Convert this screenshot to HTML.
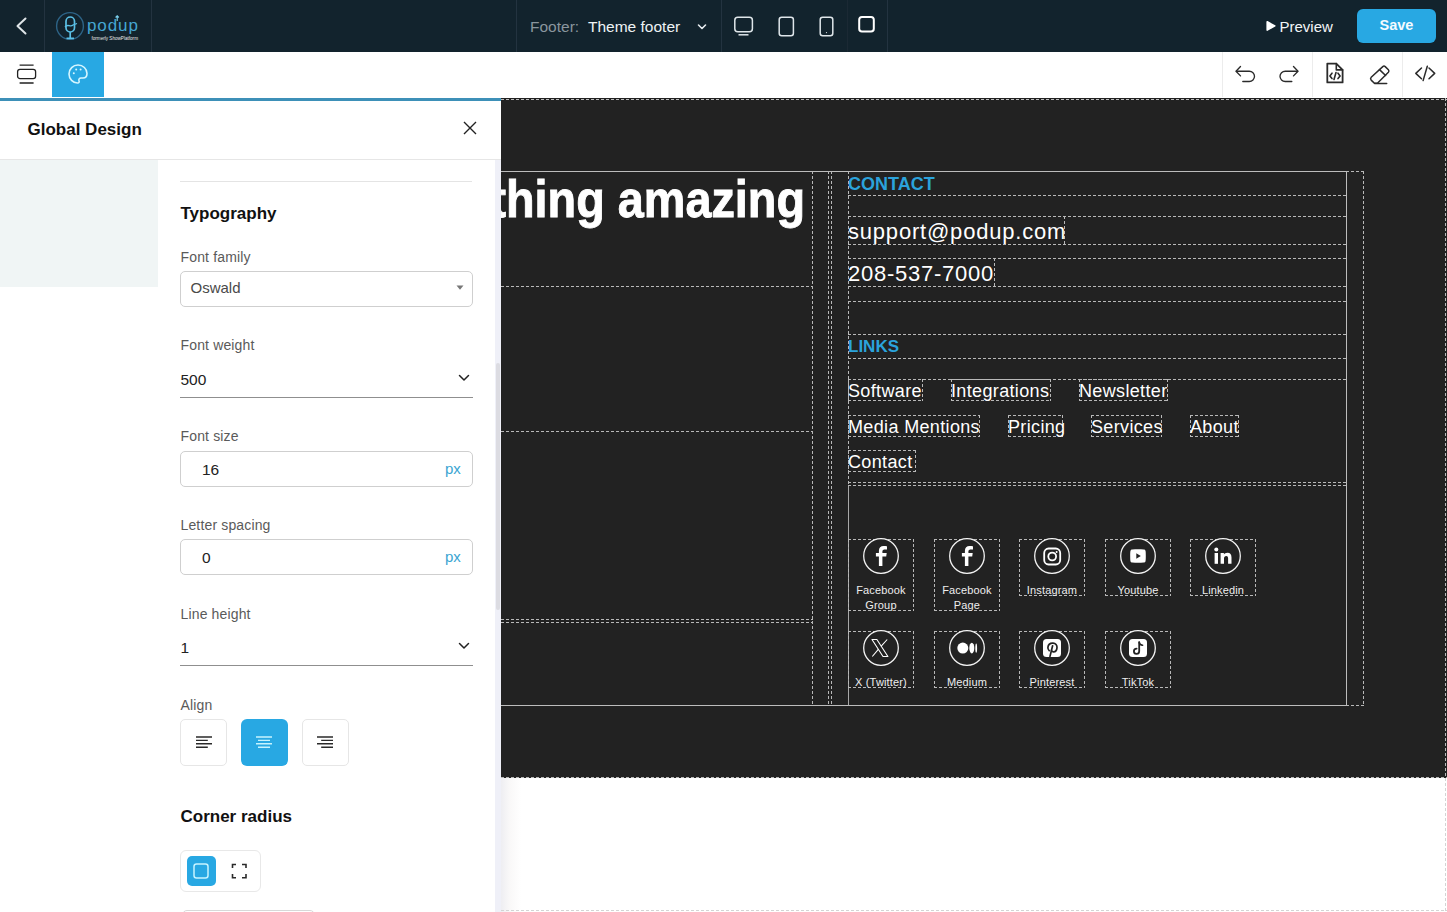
<!DOCTYPE html>
<html><head><meta charset="utf-8">
<style>
*{box-sizing:border-box;margin:0;padding:0}
html,body{width:1447px;height:912px;overflow:hidden;background:#fff;font-family:"Liberation Sans",sans-serif}
.a{position:absolute}
.t{position:absolute;white-space:nowrap}
.hd{position:absolute;height:1px;background:repeating-linear-gradient(90deg,#b9b9b9 0 3px,transparent 3px 5px)}
.vd{position:absolute;width:1px;background:repeating-linear-gradient(180deg,#b9b9b9 0 3px,transparent 3px 5px)}
.hdw{position:absolute;height:1px;background:repeating-linear-gradient(90deg,#d4d4d4 0 3px,transparent 3px 5px)}
.vdw{position:absolute;width:1px;background:repeating-linear-gradient(180deg,#d4d4d4 0 3px,transparent 3px 5px)}
.box{position:absolute;border:1px solid transparent}
.lbl{position:absolute;white-space:nowrap;font-size:14px;line-height:14px;color:#5a5a5a;letter-spacing:0.15px}
.div{position:absolute;width:1px;background:#233340}
.db{position:absolute;background:repeating-linear-gradient(90deg,#b9b9b9 0 3px,transparent 3px 5px) left top/100% 1px no-repeat,repeating-linear-gradient(90deg,#b9b9b9 0 3px,transparent 3px 5px) left bottom/100% 1px no-repeat,repeating-linear-gradient(180deg,#b9b9b9 0 3px,transparent 3px 5px) left top/1px 100% no-repeat,repeating-linear-gradient(180deg,#b9b9b9 0 3px,transparent 3px 5px) right top/1px 100% no-repeat}
.lk{font-size:18px;line-height:18px;color:#fff;letter-spacing:0.35px}
.sl{font-size:11px;line-height:11px;color:#eeeeee;text-align:center;letter-spacing:0.15px}
</style></head>
<body>

<!-- ============ TOP BAR ============ -->
<div class="a" id="topbar" style="left:0;top:0;width:1447px;height:52px;background:#12232d"></div>
<div class="div" style="left:44px;top:0;height:52px"></div>
<div class="div" style="left:151px;top:0;height:52px"></div>
<div class="div" style="left:516px;top:0;height:52px"></div>
<div class="div" style="left:721px;top:0;height:52px"></div>
<div class="div" style="left:847px;top:0;height:52px;background:#1b2934"></div>
<div class="div" style="left:887px;top:0;height:52px"></div>

<!-- back chevron -->
<svg class="a" style="left:12px;top:14px" width="20" height="24" viewBox="0 0 20 24"><path d="M13.5 4.5 L5.5 12 L13.5 19.5" fill="none" stroke="#dfe5e8" stroke-width="2" stroke-linecap="round" stroke-linejoin="round"/></svg>

<!-- logo -->
<svg class="a" style="left:54px;top:10px" width="90" height="32" viewBox="0 0 90 32">
  <circle cx="16" cy="16" r="13.4" fill="none" stroke="#2d6386" stroke-width="1.4"/>
  <rect x="12" y="7" width="8.5" height="15" rx="4.25" fill="none" stroke="#5bc0e6" stroke-width="1.7"/>
  <path d="M16.2 22 V28 M12.5 28.3 H20" stroke="#5bc0e6" stroke-width="1.7" fill="none"/>
  <path d="M11 17 C14 13, 16 18, 19 15 L23 13.5" stroke="#5bc0e6" stroke-width="1.3" fill="none"/>
  <text x="33" y="21" font-family="Liberation Sans" font-size="17" fill="#45a6d2" letter-spacing="0.9">podup</text>
  <path d="M63.2 5.8 L63.2 11 M61.6 7.5 L63.2 5.8 L64.8 7.5" stroke="#7cd2f0" stroke-width="1.1" fill="none"/>
  <text x="37.5" y="29.5" font-family="Liberation Sans" font-size="4.6" fill="#e8e8e8">formerly ShowPlatform</text>
</svg>

<!-- footer select -->
<div class="t" style="left:530px;top:18.5px;font-size:15.5px;line-height:16px;color:#8a969e">Footer:</div>
<div class="t" style="left:588px;top:18.5px;font-size:15.5px;line-height:16px;color:#eef3f5">Theme footer</div>
<svg class="a" style="left:696px;top:22px" width="12" height="10" viewBox="0 0 12 10"><path d="M2.5 3 L6 6.5 L9.5 3" fill="none" stroke="#e6ecef" stroke-width="1.6" stroke-linecap="round" stroke-linejoin="round"/></svg>

<!-- device icons -->
<svg class="a" style="left:730px;top:12px" width="160" height="28" viewBox="0 0 160 28">
  <rect x="4.8" y="5.2" width="17.6" height="14.6" rx="3" fill="none" stroke="#dfe6ea" stroke-width="1.5"/>
  <path d="M8.5 22.8 H18.5" stroke="#dfe6ea" stroke-width="1.5"/>
  <rect x="49.2" y="5.2" width="14.2" height="18.6" rx="2.5" fill="none" stroke="#dfe6ea" stroke-width="1.5"/>
  <rect x="90.2" y="5.2" width="12.6" height="18.6" rx="2.5" fill="none" stroke="#dfe6ea" stroke-width="1.5"/>
  <circle cx="96.5" cy="20.6" r="0.6" fill="#dfe6ea"/>
  <rect x="129.2" y="5" width="14.6" height="14.6" rx="2.8" fill="none" stroke="#ffffff" stroke-width="2"/>
</svg>

<!-- preview / save -->
<svg class="a" style="left:1265px;top:20px" width="12" height="12" viewBox="0 0 12 12"><path d="M2.2 1.8 L9.8 5.9 L2.2 10.1 Z" fill="#fff" stroke="#fff" stroke-width="1.6" stroke-linejoin="round"/></svg>
<div class="t" style="left:1279.5px;top:18.8px;font-size:15px;line-height:15px;color:#f2f5f7">Preview</div>
<div class="a" style="left:1357px;top:9px;width:79px;height:34px;border-radius:6px;background:#28a8e3"></div>
<div class="t" style="left:1357px;top:18.4px;width:79px;text-align:center;font-size:14.5px;line-height:14.5px;font-weight:700;color:#f4fbff">Save</div>

<!-- ============ TOOLBAR ============ -->
<div class="a" style="left:0;top:52px;width:1447px;height:46px;background:#fff"></div>
<svg class="a" style="left:14px;top:62px" width="24" height="24" viewBox="0 0 24 24">
  <path d="M5.6 3.2 H19.6 M5.6 21 H19.6" stroke="#222" stroke-width="1.3"/>
  <rect x="3.6" y="7.4" width="18" height="9.2" rx="2.4" fill="none" stroke="#222" stroke-width="1.3"/>
</svg>
<div class="a" style="left:52px;top:52px;width:52px;height:45px;background:#28a8e3"></div>
<svg class="a" style="left:66px;top:62px" width="24" height="24" viewBox="0 0 24 24">
  <path d="M12 3 C7 3 3 7 3 12 C3 17 7 21 11.5 21 C13 21 13.5 20 13 18.8 C12.5 17.4 13.3 16 15 16 H17 C19.5 16 21 14.3 21 11.5 C21 6.8 17 3 12 3 Z" fill="none" stroke="#d6f6ff" stroke-width="1.6" stroke-linejoin="round"/>
  <circle cx="7.8" cy="11.2" r="1" fill="#d6f6ff"/>
  <circle cx="10.2" cy="7.4" r="1" fill="#d6f6ff"/>
  <circle cx="14.6" cy="7.6" r="1" fill="#d6f6ff"/>
</svg>
<div class="a" style="left:1222px;top:52px;width:1px;height:45px;background:#ececec"></div>
<div class="a" style="left:1312px;top:52px;width:1px;height:45px;background:#ececec"></div>
<div class="a" style="left:1402px;top:52px;width:1px;height:45px;background:#ececec"></div>
<svg class="a" style="left:1230px;top:60px" width="210" height="28" viewBox="0 0 210 28">
  <g fill="none" stroke="#2b2b2b" stroke-width="1.5" stroke-linecap="round" stroke-linejoin="round">
    <!-- undo -->
    <path d="M10.5 6.5 L6 11.2 L10.5 15.9" stroke-width="1.35"/>
    <path d="M6.5 11.2 H19.3 C22.2 11.2 24.5 13.5 24.5 16.35 C24.5 19.2 22.2 21.5 19.3 21.5 H12.8" stroke-width="1.35"/>
    <!-- redo -->
    <path d="M63.5 6.5 L68 11.2 L63.5 15.9" stroke-width="1.35"/>
    <path d="M67.5 11.2 H55.2 C52.3 11.2 50 13.5 50 16.35 C50 19.2 52.3 21.5 55.2 21.5 H61.8" stroke-width="1.35"/>
    <!-- file code -->
    <path d="M97.3 3.6 H106.3 L112.6 9.9 V22.4 H97.3 Z" stroke-width="1.8"/>
    <path d="M106.3 3.6 V9.9 H112.6" stroke-width="1.6"/>
    <path d="M102 13.2 L99.9 15.9 L102 18.6 M108 13.2 L110.1 15.9 L108 18.6 M106 12.6 L104 19.4" stroke-width="1.6"/>
    <!-- eraser -->
    <path d="M141.2 17.2 L152.8 6.6 C153.5 6 154.5 6 155.2 6.6 L158.4 9.8 C159 10.5 159 11.5 158.4 12.2 L147.4 23.3 H144.4 L141.2 20.1 C140.5 19.3 140.5 18 141.2 17.2 Z"/>
    <path d="M149.5 9.6 L155.6 15.5"/>
    <path d="M144.6 23.4 H156.7"/>
    <!-- code -->
    <path d="M191.5 8 L185.8 13.4 L191.5 18.8 M199 8 L204.7 13.4 L199 18.8 M197.3 6.2 L193.1 20.6"/>
  </g>
</svg>

<!-- ============ CANVAS ============ -->
<div class="a" style="left:501px;top:98px;width:946px;height:680px;background:#222222"></div>
<div class="a" style="left:501px;top:778px;width:946px;height:134px;background:#fff"></div>
<div class="a" style="left:501px;top:778px;width:20px;height:134px;background:linear-gradient(90deg,rgba(238,238,242,1),rgba(248,247,247,0.8) 45%,rgba(255,255,255,0))"></div>
<div class="hd" style="left:501px;top:99px;width:946px"></div>
<div class="hd" style="left:501px;top:777px;width:946px"></div>
<div class="vd" style="left:1445px;top:98px;height:680px"></div>
<div class="hdw" style="left:501px;top:910px;width:946px"></div>
<div class="vdw" style="left:1445px;top:778px;height:134px"></div>

<!-- heading text -->
<div class="t" style="left:204.8px;top:170.6px;width:600px;text-align:right;font-size:52px;line-height:56px;font-weight:700;color:#fff;transform:scaleX(0.9);transform-origin:right top;-webkit-text-stroke:0.9px #fff">something amazing</div>

<!-- outlines -->
<div class="a" style="left:480px;top:171px;width:867px;height:535px;border:1px solid #bdbdbd"></div>
<div class="hd" style="left:1346px;top:171px;width:18px"></div>
<div class="hd" style="left:1346px;top:705px;width:18px"></div>
<div class="vd" style="left:1363px;top:171px;height:535px"></div>
<div class="vd" style="left:812px;top:171px;height:535px"></div>
<div class="vd" style="left:828px;top:171px;height:535px"></div>
<div class="vd" style="left:831px;top:171px;height:535px"></div>
<div class="vd" style="left:848px;top:171px;height:314px"></div>
<div class="a" style="left:848px;top:485px;width:1px;height:220px;background:#a8a8a8"></div>
<div class="hd" style="left:501px;top:286px;width:312px"></div>
<div class="hd" style="left:501px;top:431px;width:312px"></div>
<div class="hd" style="left:501px;top:619px;width:312px"></div>
<div class="hd" style="left:501px;top:622px;width:312px"></div>

<!-- right column horizontal lines -->
<div class="hd" style="left:848px;top:195px;width:498px"></div>
<div class="hd" style="left:848px;top:216px;width:498px"></div>
<div class="hd" style="left:848px;top:244px;width:498px"></div>
<div class="hd" style="left:848px;top:258px;width:498px"></div>
<div class="hd" style="left:848px;top:286px;width:498px"></div>
<div class="hd" style="left:848px;top:301px;width:498px"></div>
<div class="hd" style="left:848px;top:334px;width:498px"></div>
<div class="hd" style="left:848px;top:358px;width:498px"></div>
<div class="hd" style="left:848px;top:379px;width:498px"></div>
<div class="hd" style="left:848px;top:482px;width:498px"></div>
<div class="hd" style="left:848px;top:485px;width:498px"></div>
<div class="vd" style="left:1064px;top:216px;height:29px"></div>
<div class="vd" style="left:994px;top:258px;height:29px"></div>

<!-- contact texts -->
<div class="t" style="left:848px;top:175px;font-size:18px;line-height:18px;font-weight:700;color:#2ba3dc">CONTACT</div>
<div class="t" style="left:848px;top:221px;font-size:22px;line-height:22px;color:#fff;letter-spacing:0.8px">support@podup.com</div>
<div class="t" style="left:848px;top:263px;font-size:22px;line-height:22px;color:#fff;letter-spacing:0.75px">208-537-7000</div>
<div class="t" style="left:848px;top:338px;font-size:17px;line-height:17px;font-weight:700;color:#2ba3dc">LINKS</div>

<!-- links -->
<div id="links"></div>
<div class="db" style="left:848px;top:379px;width:75px;height:22px"></div>
<div class="t lk" style="left:848px;top:381.5px">Software</div>
<div class="db" style="left:951px;top:379px;width:100px;height:22px"></div>
<div class="t lk" style="left:951px;top:381.5px">Integrations</div>
<div class="db" style="left:1079px;top:379px;width:89px;height:22px"></div>
<div class="t lk" style="left:1079px;top:381.5px">Newsletter</div>
<div class="db" style="left:848px;top:415px;width:132px;height:22px"></div>
<div class="t lk" style="left:848px;top:417.7px">Media Mentions</div>
<div class="db" style="left:1008px;top:415px;width:55px;height:22px"></div>
<div class="t lk" style="left:1008px;top:417.7px">Pricing</div>
<div class="db" style="left:1091px;top:415px;width:71px;height:22px"></div>
<div class="t lk" style="left:1091px;top:417.7px">Services</div>
<div class="db" style="left:1190px;top:415px;width:49px;height:22px"></div>
<div class="t lk" style="left:1190px;top:417.7px">About</div>
<div class="db" style="left:848px;top:450px;width:68px;height:22px"></div>
<div class="t lk" style="left:848px;top:452.6px">Contact</div>
<div class="db" style="left:848px;top:539px;width:66px;height:72px"></div><svg class="a" style="left:862.5px;top:538px" width="36" height="36" viewBox="0 0 36 36"><circle cx="18" cy="18" r="17.3" fill="#222" stroke="#f2f2f2" stroke-width="1.3"/><path d="M15.9 28 V18.5 H12.9 V15 H15.9 V12.7 C15.9 9.7 17.7 7.9 20.5 7.9 C21.9 7.9 23.3 8.1 24 8.2 V11.4 H22.1 C20.5 11.4 19.4 11.9 19.4 13.3 V15 H23.7 L23.2 18.5 H19.4 V28 Z" fill="#fff"/></svg><div class="t sl" style="left:838px;top:584.5px;width:86px">Facebook</div><div class="t sl" style="left:838px;top:599.5px;width:86px">Group</div>
<div class="db" style="left:934px;top:539px;width:66px;height:72px"></div><svg class="a" style="left:948.5px;top:538px" width="36" height="36" viewBox="0 0 36 36"><circle cx="18" cy="18" r="17.3" fill="#222" stroke="#f2f2f2" stroke-width="1.3"/><path d="M15.9 28 V18.5 H12.9 V15 H15.9 V12.7 C15.9 9.7 17.7 7.9 20.5 7.9 C21.9 7.9 23.3 8.1 24 8.2 V11.4 H22.1 C20.5 11.4 19.4 11.9 19.4 13.3 V15 H23.7 L23.2 18.5 H19.4 V28 Z" fill="#fff"/></svg><div class="t sl" style="left:924px;top:584.5px;width:86px">Facebook</div><div class="t sl" style="left:924px;top:599.5px;width:86px">Page</div>
<div class="db" style="left:1019px;top:539px;width:66px;height:57px"></div><svg class="a" style="left:1033.5px;top:538px" width="36" height="36" viewBox="0 0 36 36"><circle cx="18" cy="18" r="17.3" fill="#222" stroke="#f2f2f2" stroke-width="1.3"/><rect x="10.2" y="10.5" width="16" height="16" rx="4.4" fill="none" stroke="#fff" stroke-width="1.8"/><circle cx="18.2" cy="18.5" r="3.9" fill="none" stroke="#fff" stroke-width="1.8"/><circle cx="22.6" cy="14" r="1" fill="#fff"/></svg><div class="t sl" style="left:1009px;top:584.5px;width:86px">Instagram</div>
<div class="db" style="left:1105px;top:539px;width:66px;height:57px"></div><svg class="a" style="left:1119.5px;top:538px" width="36" height="36" viewBox="0 0 36 36"><circle cx="18" cy="18" r="17.3" fill="#222" stroke="#f2f2f2" stroke-width="1.3"/><path d="M10.5 12.8 C10.8 11.8 11.4 11.5 12.4 11.4 C14 11.2 16 11.2 18 11.2 C20 11.2 22 11.2 23.6 11.4 C24.6 11.5 25.2 11.8 25.5 12.8 C25.8 14 25.8 16 25.8 18 C25.8 20 25.8 22 25.5 23.2 C25.2 24.2 24.6 24.5 23.6 24.6 C22 24.8 20 24.8 18 24.8 C16 24.8 14 24.8 12.4 24.6 C11.4 24.5 10.8 24.2 10.5 23.2 C10.2 22 10.2 20 10.2 18 C10.2 16 10.2 14 10.5 12.8 Z" fill="#fff"/><path d="M16.3 15.2 V20.8 L20.8 18 Z" fill="#222"/></svg><div class="t sl" style="left:1095px;top:584.5px;width:86px">Youtube</div>
<div class="db" style="left:1190px;top:539px;width:66px;height:57px"></div><svg class="a" style="left:1204.5px;top:538px" width="36" height="36" viewBox="0 0 36 36"><circle cx="18" cy="18" r="17.3" fill="#222" stroke="#f2f2f2" stroke-width="1.3"/><rect x="9.6" y="15" width="3.4" height="10.8" fill="#fff"/><circle cx="11.3" cy="11.4" r="2" fill="#fff"/><path d="M15.6 15 H18.9 V16.6 C19.5 15.6 20.7 14.8 22.5 14.8 C25.3 14.8 26.5 16.5 26.5 19.6 V25.8 H23.1 V20.3 C23.1 18.9 22.7 17.9 21.3 17.9 C19.8 17.9 19 19 19 20.5 V25.8 H15.6 Z" fill="#fff"/></svg><div class="t sl" style="left:1180px;top:584.5px;width:86px">Linkedin</div>
<div class="db" style="left:848px;top:631px;width:66px;height:57px"></div><svg class="a" style="left:862.5px;top:630px" width="36" height="36" viewBox="0 0 36 36"><circle cx="18" cy="18" r="17.3" fill="#222" stroke="#f2f2f2" stroke-width="1.3"/><path d="M9 9.5 H13.9 L24.9 26.5 H20 Z" fill="none" stroke="#fff" stroke-width="1.1" stroke-linejoin="round"/><path d="M24.2 9.5 L18 16.4 M15.3 19.4 L9.3 26.5" stroke="#fff" stroke-width="1.1"/></svg><div class="t sl" style="left:838px;top:676.5px;width:86px">X (Twitter)</div>
<div class="db" style="left:934px;top:631px;width:66px;height:57px"></div><svg class="a" style="left:948.5px;top:630px" width="36" height="36" viewBox="0 0 36 36"><circle cx="18" cy="18" r="17.3" fill="#222" stroke="#f2f2f2" stroke-width="1.3"/><circle cx="13.8" cy="18.1" r="5.5" fill="#fff"/><ellipse cx="22.8" cy="18.1" rx="2.5" ry="5.3" fill="#fff"/><ellipse cx="27.2" cy="18.1" rx="0.9" ry="4.7" fill="#fff"/></svg><div class="t sl" style="left:924px;top:676.5px;width:86px">Medium</div>
<div class="db" style="left:1019px;top:631px;width:66px;height:57px"></div><svg class="a" style="left:1033.5px;top:630px" width="36" height="36" viewBox="0 0 36 36"><circle cx="18" cy="18" r="17.3" fill="#222" stroke="#f2f2f2" stroke-width="1.3"/><rect x="9" y="9" width="18" height="18" rx="3.5" fill="#fff"/><path d="M15.2 20.6 C14.2 19.8 13.8 18.6 13.9 17.4 C14.2 14.6 16.4 13 19 13.1 C21.6 13.2 23.2 15.1 23 17.6 C22.8 20.2 21.2 21.9 19.3 21.8 C18.3 21.7 17.6 21.2 17.5 20.3" fill="none" stroke="#222" stroke-width="1.7" stroke-linecap="round"/><path d="M18.6 15.8 L16 26.4" fill="none" stroke="#222" stroke-width="1.7" stroke-linecap="round"/></svg><div class="t sl" style="left:1009px;top:676.5px;width:86px">Pinterest</div>
<div class="db" style="left:1105px;top:631px;width:66px;height:57px"></div><svg class="a" style="left:1119.5px;top:630px" width="36" height="36" viewBox="0 0 36 36"><circle cx="18" cy="18" r="17.3" fill="#222" stroke="#f2f2f2" stroke-width="1.3"/><rect x="9" y="9" width="18" height="18" rx="3.5" fill="#fff"/><path d="M19.2 12.2 V21.2 C19.2 22.8 18 23.9 16.5 23.9 C15 23.9 13.9 22.7 13.9 21.3 C13.9 19.8 15.1 18.6 16.6 18.6" fill="none" stroke="#222" stroke-width="1.8" stroke-linecap="round"/><path d="M19.2 12.4 C19.5 14.2 20.8 15.2 22.6 15.3" fill="none" stroke="#222" stroke-width="1.6" stroke-linecap="round"/></svg><div class="t sl" style="left:1095px;top:676.5px;width:86px">TikTok</div>
<!-- socials -->
<div id="socials"></div>

<!-- ============ PANEL ============ -->
<div class="a" style="left:0;top:98px;width:501px;height:3px;background:#3d90b8"></div>
<div class="a" style="left:0;top:101px;width:501px;height:811px;background:#fff"></div>
<div class="t" style="left:27.5px;top:121px;font-size:17px;line-height:17px;font-weight:700;color:#111">Global Design</div>
<svg class="a" style="left:462px;top:120px" width="16" height="16" viewBox="0 0 16 16"><path d="M2 2 L14 14 M14 2 L2 14" stroke="#222" stroke-width="1.4"/></svg>
<div class="a" style="left:0;top:159px;width:501px;height:1px;background:#e6e6e6"></div>
<div class="a" style="left:0;top:160px;width:158px;height:127px;background:#f0f5f5"></div>
<div class="a" style="left:495px;top:160px;width:6px;height:752px;background:#eff0f8"></div>
<div class="a" style="left:496px;top:363px;width:4px;height:247px;background:#dcdce2;border-radius:2px"></div>

<div class="a" style="left:180px;top:181px;width:292px;height:1px;background:#e4e4e4"></div>
<div class="t" style="left:180.5px;top:205px;font-size:17px;line-height:17px;font-weight:700;color:#111">Typography</div>

<div class="lbl" style="left:180.5px;top:250.1px">Font family</div>
<div class="a" style="left:180px;top:271px;width:293px;height:36px;border:1px solid #cfcfcf;border-radius:5px"></div>
<div class="t" style="left:190.5px;top:280.2px;font-size:15px;line-height:15px;color:#4a4a4a">Oswald</div>
<svg class="a" style="left:455px;top:284px" width="10" height="8" viewBox="0 0 10 8"><path d="M1.5 1.5 H8.5 L5 5.8 Z" fill="#777"/></svg>

<div class="lbl" style="left:180.5px;top:338.4px">Font weight</div>
<div class="t" style="left:180.5px;top:371.9px;font-size:15.5px;line-height:15.5px;color:#222">500</div>
<svg class="a" style="left:457px;top:372px" width="14" height="12" viewBox="0 0 14 12"><path d="M2.5 3.5 L7 8 L11.5 3.5" fill="none" stroke="#222" stroke-width="1.5" stroke-linecap="round" stroke-linejoin="round"/></svg>
<div class="a" style="left:180px;top:397px;width:293px;height:1px;background:#8f8f8f"></div>

<div class="lbl" style="left:180.5px;top:429.1px">Font size</div>
<div class="a" style="left:180px;top:451px;width:293px;height:36px;border:1px solid #cfcfcf;border-radius:5px"></div>
<div class="t" style="left:202px;top:462.2px;font-size:15.5px;line-height:15.5px;color:#222">16</div>
<div class="t" style="left:445px;top:460.9px;font-size:15px;line-height:15px;color:#3aa5d2">px</div>

<div class="lbl" style="left:180.5px;top:518.4px">Letter spacing</div>
<div class="a" style="left:180px;top:539px;width:293px;height:36px;border:1px solid #cfcfcf;border-radius:5px"></div>
<div class="t" style="left:202px;top:549.9px;font-size:15.5px;line-height:15.5px;color:#222">0</div>
<div class="t" style="left:445px;top:548.7px;font-size:15px;line-height:15px;color:#3aa5d2">px</div>

<div class="lbl" style="left:180.5px;top:607.1px">Line height</div>
<div class="t" style="left:180.5px;top:639.7px;font-size:15.5px;line-height:15.5px;color:#222">1</div>
<svg class="a" style="left:457px;top:640px" width="14" height="12" viewBox="0 0 14 12"><path d="M2.5 3.5 L7 8 L11.5 3.5" fill="none" stroke="#222" stroke-width="1.5" stroke-linecap="round" stroke-linejoin="round"/></svg>
<div class="a" style="left:180px;top:665px;width:293px;height:1px;background:#8f8f8f"></div>

<div class="lbl" style="left:180.5px;top:697.7px">Align</div>
<div class="a" style="left:180px;top:719px;width:47px;height:47px;border:1px solid #e6e6e6;border-radius:5px"></div>
<div class="a" style="left:241px;top:719px;width:47px;height:47px;border-radius:6px;background:#28a8e3"></div>
<div class="a" style="left:302px;top:719px;width:47px;height:47px;border:1px solid #e6e6e6;border-radius:5px"></div>
<svg class="a" style="left:180px;top:719px" width="170" height="47" viewBox="0 0 170 47">
  <g stroke-width="1.4">
    <path d="M16 18 H32 M16 21.4 H27.8 M16 24.8 H32 M16 28.2 H27.8" stroke="#2a2a2a"/>
    <path d="M76 18 H92 M78 21.4 H90 M76 24.8 H92 M78 28.2 H90" stroke="#c6f3ff"/>
    <path d="M137 18 H153 M141.2 21.4 H153 M137 24.8 H153 M141.2 28.2 H153" stroke="#2a2a2a"/>
  </g>
</svg>

<div class="t" style="left:180.5px;top:807.6px;font-size:17px;line-height:17px;font-weight:700;color:#111">Corner radius</div>
<div class="a" style="left:180px;top:850px;width:81px;height:42px;border:1px solid #e8e8e8;border-radius:6px"></div>
<div class="a" style="left:187px;top:856px;width:29px;height:30px;border-radius:5px;background:#28a8e3"></div>
<svg class="a" style="left:187px;top:856px" width="70" height="30" viewBox="0 0 70 30">
  <rect x="7" y="8" width="14" height="14" rx="2.5" fill="none" stroke="#c6f3ff" stroke-width="1.5"/>
  <path d="M45.5 12 V8.5 H49 M55 8.5 H59 V12 M59 18 V21.8 H55 M49 21.8 H45.5 V18" fill="none" stroke="#2a2a2a" stroke-width="1.6"/>
</svg>
<div class="a" style="left:182px;top:910px;width:133px;height:10px;border:1px solid #d8d8d8;border-radius:5px"></div>

</body></html>
